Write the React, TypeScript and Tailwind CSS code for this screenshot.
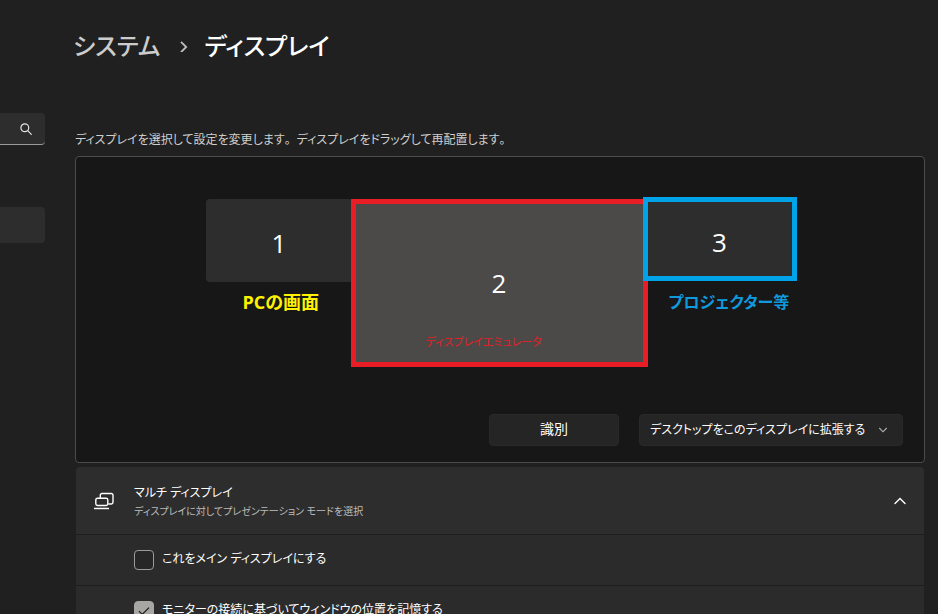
import { useState } from 'react';

// ─── Icons ───────────────────────────────────────────────────────────────────

function SearchIcon() {
  return (
    <svg className="w-3 h-3" viewBox="0 0 12 12" fill="none" stroke="currentColor" strokeWidth="1.2" strokeLinecap="round">
      <circle cx="4.8" cy="4.8" r="3.9" />
      <path d="M7.7 7.7 11.3 11.3" />
    </svg>
  );
}

function BreadcrumbChevron() {
  return (
    <svg className="w-2 h-3" viewBox="0 0 8 12" fill="none" stroke="currentColor" strokeWidth="1.8">
      <path d="M1 1.8 6.2 7 1 12.2" />
    </svg>
  );
}

function ChevronDown() {
  return (
    <svg className="w-2 h-2" viewBox="0 0 8 8" fill="none" stroke="currentColor" strokeWidth="1.1">
      <path d="M.3 2 4 5.8 7.7 2" />
    </svg>
  );
}

function ChevronUp() {
  return (
    <svg className="w-3 h-3" viewBox="0 0 12 12" fill="none" stroke="currentColor" strokeWidth="1.4" strokeLinecap="round">
      <path d="M1 8.5 6 3.5 11 8.5" />
    </svg>
  );
}

function MultiDisplayIcon() {
  return (
    <svg className="w-5 h-5" viewBox="0 0 20 20" fill="none" stroke="currentColor" strokeWidth="1.4">
      <path d="M6.3 7.2V4.2a1.7 1.7 0 0 1 1.7-1.7h9.3A1.7 1.7 0 0 1 19 4.2v7.1a1.7 1.7 0 0 1-1.7 1.7h-3.1" />
      <rect x="1.8" y="7.2" width="12" height="7.3" rx="1.7" />
      <path d="M0 17.5h15" />
    </svg>
  );
}

// ─── Display arrangement ─────────────────────────────────────────────────────

const modes = ['デスクトップをこのディスプレイに拡張する', '表示画面を複製する', '1 のみに表示する', '2 のみに表示する'];

function Arrangement() {
  return (
    <div className="relative mx-auto w-[591px] h-[170px] text-[26px] leading-8 text-white">
      <button className="absolute left-0 top-0.5 w-[147px] h-[83px] rounded-[4px] bg-[#2d2d2d] pt-1">1</button>
      <button className="absolute left-[145px] top-0.5 w-[297px] h-[168px] border-5 border-[#e81d25] bg-[#4c4a48]">2</button>
      <button className="absolute left-[437px] top-0 w-[154px] h-[84px] border-5 border-[#00a2e8] bg-[#2d2d2d] pt-1.5">3</button>
      <span className="absolute left-[37px] top-[93px] text-lg leading-6 font-bold text-[#fff200]">PCの画面</span>
      <span className="absolute left-[220px] top-[133px] text-[11px] leading-6 text-[#e01f26]">ディスプレイエミュレータ</span>
      <span className="absolute left-[463px] top-[93px] text-base leading-6 font-bold text-[#0f9ade]">プロジェクター等</span>
    </div>
  );
}

// Full stop that keeps its full-width advance between sentences
function Stop() {
  return <span className="[font-feature-settings:normal]">。</span>;
}

function CheckRow({ label, checked, onChange }: { label: string; checked: boolean; onChange: (v: boolean) => void }) {
  return (
    <label className="flex items-center gap-2 h-[51px] pl-[58px] border-t border-[#1d1d1d] bg-[#2b2b2b] text-xs leading-5 text-white">
      <span className="grid shrink-0">
        <input
          type="checkbox"
          checked={checked}
          onChange={(e) => onChange(e.target.checked)}
          className="col-start-1 row-start-1 appearance-none w-5 h-5 rounded-[4px] border border-[#9b9b9b] bg-[#262626] checked:bg-[#a8a6a3] checked:border-[#a8a6a3]"
        />
        {checked && (
          <svg className="col-start-1 row-start-1 place-self-center w-3 h-3 pointer-events-none" viewBox="0 0 12 12" fill="none" stroke="#1a1a1a" strokeWidth="1.2">
            <path d="M1 6.2 4.2 9.4 11 2.6" />
          </svg>
        )}
      </span>
      <span className="pb-0.5">{label}</span>
    </label>
  );
}

// ─── Page ────────────────────────────────────────────────────────────────────

export default function App() {
  const [mode, setMode] = useState(modes[0]);
  const [open, setOpen] = useState(true);
  const [isMain, setIsMain] = useState(false);
  const [remember, setRemember] = useState(true);

  return (
    <div
      lang="ja"
      className="flex h-screen overflow-hidden bg-[#202020] font-['Open_Sans','Noto_Sans_CJK_JP',sans-serif] [font-feature-settings:'palt']"
    >
      <aside className="w-[45px] shrink-0 pt-[113px]">
        <label className="flex items-center h-8 rounded-r-[4px] border-b border-[#9a9a9a] bg-[#2d2d2d] pr-[13px] text-[#e4e4e4]">
          <input type="text" aria-label="設定の検索" className="min-w-0 flex-1 bg-transparent outline-none" />
          <SearchIcon />
        </label>
        <button aria-label="システム" className="block mt-[62px] w-full h-9 rounded-r-[4px] bg-[#2d2d2d]" />
      </aside>

      <main className="flex-1 min-w-0 pl-[30px] pr-[13px] pt-6">
        <h1 className="-ml-0.5 flex items-center h-11 text-2xl font-medium text-white">
          <a href="#system" className="text-[#cccccc]">システム</a>
          <span className="ml-5 mr-4 text-[#bdbdbd]"><BreadcrumbChevron /></span>
          ディスプレイ
        </h1>

        <p className="mt-[62px] text-xs leading-5 text-[#cfcfcf]">
          ディスプレイを選択して設定を変更します<Stop />ディスプレイをドラッグして再配置します<Stop />
        </p>

        <section className="mt-1.5 rounded-[4px] border border-[#4b4b4b] bg-[#171717] pt-10 pb-4">
          <div className="pl-0.5">
            <Arrangement />
          </div>
          <div className="mt-[47px] flex justify-end gap-5 pr-[21px] text-white">
            <button className="w-[130px] h-8 rounded-[4px] border border-[#292929] bg-[#252525] pb-0.5 text-sm leading-5">識別</button>
            <div className="grid grid-cols-1 w-[264px]">
              <select
                aria-label="表示モード"
                value={mode}
                onChange={(e) => setMode(e.target.value)}
                className="col-start-1 row-start-1 w-full appearance-none h-8 rounded-[4px] border border-[#292929] bg-[#252525] pl-2.5 pr-8 text-xs leading-5"
              >
                {modes.map((m) => <option key={m}>{m}</option>)}
              </select>
              <span className="col-start-1 row-start-1 self-center justify-self-end mr-4 pointer-events-none text-[#b5b5b5]">
                <ChevronDown />
              </span>
            </div>
          </div>
        </section>

        <section className="mt-1 mx-px rounded-[4px] overflow-hidden">
          <button
            onClick={() => setOpen(!open)}
            aria-expanded={open}
            className="flex items-center w-full h-[67px] bg-[#2d2d2d] px-[18px] text-left text-white"
          >
            <MultiDisplayIcon />
            <span className="flex-1 ml-5 pt-0.5">
              <span className="block text-xs leading-[18px]">マルチ ディスプレイ</span>
              <span className="block text-[10px] leading-[18px] text-[#bcbcbc]">ディスプレイに対してプレゼンテーション モードを選択</span>
            </span>
            <ChevronUp />
          </button>
          {open && (
            <>
              <CheckRow label="これをメイン ディスプレイにする" checked={isMain} onChange={setIsMain} />
              <CheckRow label="モニターの接続に基づいてウィンドウの位置を記憶する" checked={remember} onChange={setRemember} />
            </>
          )}
        </section>
      </main>
    </div>
  );
}
